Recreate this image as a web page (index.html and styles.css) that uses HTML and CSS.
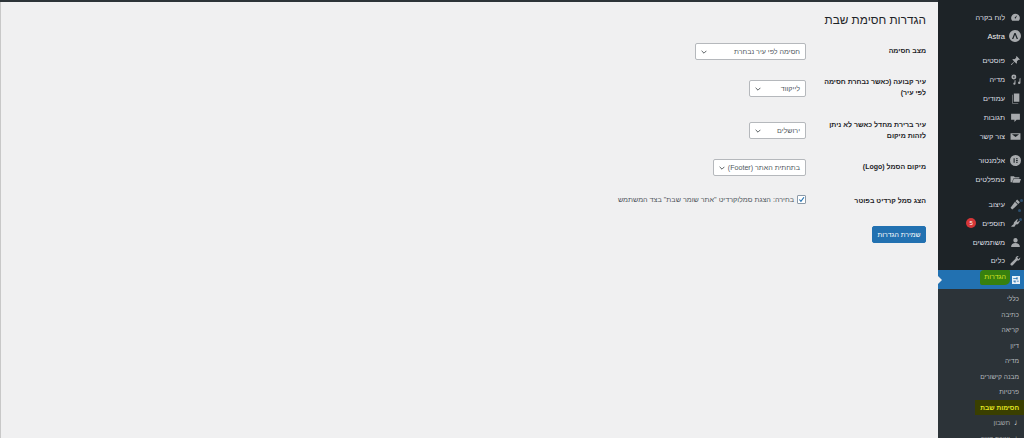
FILE: index.html
```html
<!DOCTYPE html>
<html lang="he" dir="rtl">
<head>
<meta charset="utf-8">
<title>הגדרות חסימת שבת</title>
<link rel="stylesheet" href="styles.css">
</head>
<body>
<div class="topbar"></div>
<div class="layout">
  <nav class="sidebar">
    <ul class="menu">
      <li class="item"><svg class="ic" viewBox="0 0 20 20"><path d="M10 3a8 8 0 0 0-8 8c0 2 .7 3.800 2 5h12c1.300-1.200 2-3 2-5a8 8 0 0 0-8-8zm0 9a1.500 1.500 0 0 1-1-2.600L13 6l-2 4.500A1.500 1.500 0 0 1 10 12z"/></svg><span>לוח בקרה</span></li>
      <li class="item bright"><svg class="ic ic-lg" viewBox="0 0 20 20"><path fill-rule="evenodd" d="M10 0a10 10 0 1 0 0 20 10 10 0 0 0 0-20zM9 5h2l4 10h-2.200L10 8l-2.800 7H5z"/></svg><span>Astra</span></li>
      <li class="item sep"><svg class="ic" viewBox="0 0 20 20"><path d="M12 2l6 6-1.500 1-1-.5-3 3c.5 1.800.2 3.300-.7 4.500L8 12.200 3 18l-1 0 0-1 5.800-5L4 8.200c1.200-.9 2.700-1.200 4.500-.7l3-3-.5-1z"/></svg><span>פוסטים</span></li>
      <li class="item"><svg class="ic" viewBox="0 0 20 20"><path fill-rule="evenodd" d="M7 1a4.500 4.500 0 1 0 0 9 4.500 4.500 0 0 0 0-9zm0 3a1.500 1.500 0 1 1 0 3 1.500 1.500 0 0 1 0-3z"/><path d="M19 7v9a2.200 2.200 0 1 1-1.800-2.100V8.500zM10 11v6.500a2 2 0 1 1-1.800-2V12z"/></svg><span>מדיה</span></li>
      <li class="item"><svg class="ic" viewBox="0 0 20 20"><path d="M7 1h10v15H7zM5 3v15h10v1H4V3z"/></svg><span>עמודים</span></li>
      <li class="item"><svg class="ic" viewBox="0 0 20 20"><path d="M2 3h16v11h-6l-4 4v-4H2z"/></svg><span>תגובות</span></li>
      <li class="item"><svg class="ic" viewBox="0 0 20 20"><path d="M1 4h18v12H1zm2.500 2 6.500 5 6.500-5z" fill-rule="evenodd"/></svg><span>צור קשר</span></li>
      <li class="item sep"><svg class="ic" viewBox="0 0 20 20"><path fill-rule="evenodd" d="M10 0a10 10 0 1 0 0 20 10 10 0 0 0 0-20zM6.500 6H8.500v8h-2zm4.500 0h3v1.600h-3zm0 3.200h3v1.600h-3zm0 3.200h3V14h-3z"/></svg><span>אלמנטור</span></li>
      <li class="item"><svg class="ic" viewBox="0 0 20 20"><path d="M1 4h6l2 2h8v2H6L4 15H1zM6.500 9H20l-2.500 7H4.500z"/></svg><span>טמפלטים</span></li>
      <li class="item sep"><svg class="ic" viewBox="0 0 20 20"><path d="M13 1l5 5-3 3-5-5zM9 5l5 5-6 6-4 3-3-3 3-4z"/></svg><span>עיצוב</span><i class="dot dot-a"></i><i class="dot dot-b"></i></li>
      <li class="item"><svg class="ic" viewBox="0 0 20 20"><path d="M13 2l1.500 1-2 3 2 1.500 2-3L18 6l-2.500 4c-1 1.500-3 2-4.500 1.500L8 16H3l-1-1 5-4c-.5-1.500-.3-2.500.5-3.500z"/></svg><span>תוספים</span><b class="badge">5</b><i class="dot dot-c"></i></li>
      <li class="item"><svg class="ic" viewBox="0 0 20 20"><path d="M10 2a4 4 0 1 0 0 8 4 4 0 0 0 0-8zM2 18c0-4 3-7 8-7s8 3 8 7z"/></svg><span>משתמשים</span></li>
      <li class="item"><svg class="ic" viewBox="0 0 20 20"><path d="M18.500 4.500l-3 3-2.500-2.500 3-3C13 1 9.500 3 10 7L1.500 15c-1 1-1 2.500 0 3.500s2.500 1 3.500 0L13 10c4 .5 6-3 5.500-5.500z"/></svg><span>כלים</span></li>
      <li class="item active"><svg class="ic ic-sm" viewBox="0 0 20 20"><path fill-rule="evenodd" d="M0 0h20v20H0zm11 3v2H3v2h8v2h3V3zM6 11v1H3v2h3v2h3v-5zm6 1v2h5v-2z"/></svg><span class="mark-green">הגדרות</span></li>
    </ul>
    <ul class="submenu">
      <li>כללי</li>
      <li>כתיבה</li>
      <li>קריאה</li>
      <li>דיון</li>
      <li>מדיה</li>
      <li>מבנה קישורים</li>
      <li>פרטיות</li>
      <li class="current"><span>חסימות שבת</span></li>
      <li class="noted"><i class="note">♩</i><span>חשבון</span></li>
      <li class="noted"><i class="note">♩</i><span>יצירת קשר</span></li>
    </ul>
  </nav>
  <main class="content">
    <h1 class="title">הגדרות חסימת שבת</h1>
    <div class="row row-mode">
      <div class="label">מצב חסימה</div>
      <div class="select w-110"><span>חסימה לפי עיר נבחרת</span><svg class="chev" viewBox="0 0 10 6"><path d="M1 1l4 4 4-4"/></svg></div>
    </div>
    <div class="row row-city">
      <div class="label">עיר קבועה (כאשר נבחרת חסימה לפי עיר)</div>
      <div class="select w-56"><span>לייקווד</span><svg class="chev" viewBox="0 0 10 6"><path d="M1 1l4 4 4-4"/></svg></div>
    </div>
    <div class="row row-default">
      <div class="label">עיר ברירת מחדל כאשר לא ניתן לזהות מיקום</div>
      <div class="select w-56"><span>ירושלים</span><svg class="chev" viewBox="0 0 10 6"><path d="M1 1l4 4 4-4"/></svg></div>
    </div>
    <div class="row row-logo">
      <div class="label">מיקום הסמל (Logo)</div>
      <div class="select w-92"><span>בתחתית האתר (Footer)</span><svg class="chev" viewBox="0 0 10 6"><path d="M1 1l4 4 4-4"/></svg></div>
    </div>
    <div class="row row-credit">
      <div class="label">הצג סמל קרדיט בפוטר</div>
      <label class="check"><span class="box"><svg viewBox="0 0 10 10"><path d="M2 5l2.200 2.500L8.500 1.800"/></svg></span><span>בחירה: הצגת סמלוקרדיט "אתר שומר שבת" בצד המשתמש</span></label>
    </div>
    <div class="actions"><button class="save" type="button">שמירת הגדרות</button></div>
  </main>
</div>
</body>
</html>
```
FILE: styles.css
```css
* { box-sizing: border-box; }
html, body { margin: 0; padding: 0; height: 438px; overflow: hidden; }
body { background: #f0f0f1; font-family: "Liberation Sans", Arial, sans-serif; color: #2c3338; font-size: 7px; }
.topbar { height: 2px; background: #2c3338; }
.layout { display: flex; height: 436px; }
.sidebar { width: 86px; flex: none; background: #1d2327; color: #f0f0f1; overflow: hidden; margin-top: -2px; padding-top: 8px; }
.menu, .submenu { list-style: none; margin: 0; padding: 0; }
.item { display: flex; align-items: center; height: 18.800px; padding-right: 3px; gap: 5px; font-size: 7.300px; color: #dcdfe2; position: relative; }
.item.bright { color: #f0f0f1; font-size: 7.500px; }
.item.sep { margin-top: 6px; }
.ic { width: 11px; height: 11px; fill: #a7aaad; flex: none; }
.ic-lg { width: 12px; height: 12px; margin: 0 0 0 -1px; }
.ic-sm { width: 8px; height: 8px; margin: 0 1px 0 2px; }
.badge { width: 10px; height: 10px; border-radius: 50%; background: #d63638; color: #fff; font-size: 6px; font-weight: 400; display: flex; align-items: center; justify-content: center; margin-right: 1px; }
.dot { position: absolute; width: 3px; height: 3px; border-radius: 50%; background: #2c4f6e; }
.dot-a { right: 1px; top: 4px; }
.dot-b { right: 3px; top: 14px; }
.dot-c { right: 2px; top: 4px; }
.active { background: #2271b1; color: #f0f0f1; }
.active .ic { fill: #e8f0f7; }
.active::after { content: ""; position: absolute; left: 0; top: 6px; border: 4px solid transparent; border-left-color: #f0f0f1; }
.mark-green { background: #37800f; color: #d9e422; padding: 0 4px; margin-right: -5px; height: 15px; line-height: 14px; align-self: flex-start; font-size: 7px; border-radius: 4px 1px 5px 2px; }
.submenu { background: #2c3338; padding-top: 2px; font-size: 6.600px; color: #b4b9be; }
.submenu li { height: 15.500px; padding-right: 5px; display: flex; align-items: center; gap: 3px; }
.submenu .current { color: #e4e820; font-weight: 700; padding-right: 0; }
.submenu .current span { background: #3a3f00; width: 49px; height: 15px; line-height: 15px; padding-right: 5px; white-space: nowrap; }
.submenu .noted { color: #a7aaad; padding-right: 2px; gap: 6px; }
.note { font-style: normal; color: #e4e6e8; font-size: 8px; width: 6px; flex: none; }
.content { flex: 1; min-width: 0; padding: 10px 12px 0 0; border-left: 1px solid #c8c8c8; }
.title { margin: 0 0 15px; font-size: 11.800px; font-weight: 400; color: #1d2327; line-height: 16px; }
.row { display: flex; align-items: flex-start; }
.label { width: 120px; flex: none; font-size: 7px; font-weight: 700; line-height: 11px; color: #1d2327; padding-left: 12px; }
.select { height: 17px; background: #fff; border: 1px solid #b5b8bc; border-radius: 2px; display: flex; align-items: center; justify-content: space-between; padding: 0 5px; font-size: 7.100px; color: #50575e; flex: none; white-space: nowrap; }
.chev { width: 6px; height: 4px; fill: none; stroke: #2c3338; stroke-width: 1.300; flex: none; }
.w-110 { width: 111px; }
.w-56 { width: 57px; }
.w-92 { width: 93px; }
.row-mode { height: 37px; }
.row-mode .label { padding-top: 2px; }
.row-city { height: 42px; }
.row-city .label { margin-top: -4px; }
.row-default { height: 37px; }
.row-default .label { margin-top: -3px; }
.row-logo { height: 36px; }
.row-logo .label { padding-top: 2px; }
.row-credit { height: 31px; }
.check { display: flex; align-items: center; gap: 3px; font-size: 7.200px; color: #50575e; white-space: nowrap; }
.box { width: 9px; height: 9px; background: #fff; border: 1px solid #8c9aa8; border-radius: 1px; display: flex; flex: none; }
.box svg { width: 100%; height: 100%; fill: none; stroke: #2271b1; stroke-width: 1.600; overflow: visible; }
.save { height: 17px; width: 54px; padding: 0; background: #2271b1; color: #fff; border: 1px solid #2271b1; border-radius: 2px; font: 6.900px "Liberation Sans", Arial, sans-serif; }
```
